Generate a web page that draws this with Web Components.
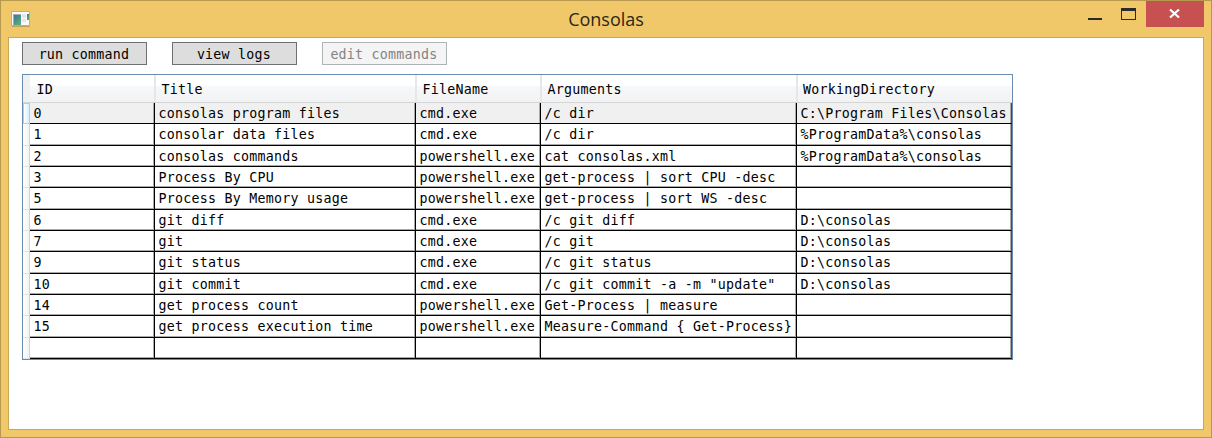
<!DOCTYPE html>
<html lang="en">
<head>
<meta charset="utf-8">
<title>Consolas</title>
<style>
html,body{margin:0;height:100%;overflow:hidden}
body{font:13.3px/20px "DejaVu Sans Mono","Liberation Mono",monospace;color:#000}
</style>
</head>
<body>
<app-window caption="Consolas">
  <tool-bar>
    <push-button>run command</push-button>
    <push-button>view logs</push-button>
    <push-button disabled>edit commands</push-button>
  </tool-bar>
  <command-grid></command-grid>
</app-window>
<script>
class AppWindow extends HTMLElement{
  constructor(){
    super();
    this.attachShadow({mode:'open'}).innerHTML=`
<style>
:host{display:flex;flex-direction:column;box-sizing:border-box;width:1212px;height:438px;background:#f0c869;border:1px solid #b6984f;padding:0 7px 7px}
header{display:grid;grid-template-columns:1fr auto 1fr;height:36px;flex:none}
.icon{margin:10px 0 0 3px;display:block}
h1{margin:0;font:400 18px/36px "Open Sans","Noto Sans",sans-serif;color:#2b2718;letter-spacing:0}
.controls{display:flex;justify-content:flex-end}
.controls svg{display:block}
main{flex:1;box-sizing:border-box;background:#fff;border:1px solid #c9a757;padding:4px 13px}
</style>
<header>
<svg class="icon" width="20" height="17" viewBox="0 0 20 17">
<defs><linearGradient id="g" x1="0" y1="0" x2=".7" y2="1"><stop stop-color="#3f719f"/><stop offset="1" stop-color="#56b078"/></linearGradient></defs>
<rect x="1" y="1" width="18" height="14" fill="#fafafa"/><path d="M.5 15V.5H18.5V14.5H.5" fill="none" stroke="#adb0aa"/><path d="M1 15.5H19" stroke="#c3a15d"/>
<rect x="2" y="3" width="8" height="11" fill="#a4adb5"/><rect x="3" y="4" width="7" height="10" fill="url(#g)"/>
<path d="M11 3h4v4h-4zM11 8h4v3h-4z" fill="#e4e6e7"/><path d="M16 3h2v6h-2z" fill="url(#g)"/>
</svg>
<h1></h1>
<div class="controls">
<svg width="148" height="27" viewBox="0 0 148 27" shape-rendering="crispEdges">
<path d="M32 17h14v2H32z" fill="#2a2a2a"/>
<path fill-rule="evenodd" d="M65 7h15v12H65zM66 10v8h13v-8z" fill="#2a2a2a"/>
<path d="M90 0h58v26H90z" fill="#c75050"/>
<path d="M114 8.5l9 8M123 8.5l-9 8" stroke="#fff" stroke-width="2.2" shape-rendering="auto"/>
</svg>
</div>
</header>
<main><slot></slot></main>`;
    this.shadowRoot.querySelector('h1').textContent=this.getAttribute('caption');
  }
}
customElements.define('app-window',AppWindow);

class ToolBar extends HTMLElement{
  constructor(){
    super();
    this.attachShadow({mode:'open'}).innerHTML=`<style>:host{display:flex;gap:25px}</style><slot></slot>`;
  }
}
customElements.define('tool-bar',ToolBar);

class PushButton extends HTMLElement{
  constructor(){
    super();
    this.attachShadow({mode:'open'}).innerHTML=`
<style>
:host{display:block}
button{display:block;box-sizing:border-box;width:125px;height:23px;margin:0;padding:2px 1px 0 0;border:1px solid #707070;background:#ddd;color:#000;font:inherit;line-height:19px;letter-spacing:.243px;text-align:center}
button:disabled{background:#f4f4f4;border-color:#adb2b5;color:#838383}
</style><button><slot></slot></button>`;
    this.shadowRoot.querySelector('button').disabled=this.hasAttribute('disabled');
  }
}
customElements.define('push-button',PushButton);

class GridRow extends HTMLElement{
  constructor(){
    super();
    this.attachShadow({mode:'open'}).innerHTML=`
<style>
:host{display:grid;grid-template-columns:7px 125px 261px 125px 256px 215px;height:var(--h,21px)}
.handle{box-sizing:border-box;background:linear-gradient(90deg,#fff,#f3f3f4);border-right:1px solid #d2d2d2;border-bottom:1px solid #e3e3e3}
.cell{box-sizing:border-box;padding:1px 0 0 3.6px;line-height:20px;white-space:pre;letter-spacing:.243px;border-right:1px solid #000;border-bottom:1px solid #000;box-shadow:inset -1px -1px #aaa;overflow:hidden}
.cell:last-child{border-right-color:#4a4a4a}
:host([selected]) .cell{background:#f0f0f0;box-shadow:inset -1px 0 #aaa}
:host([selected]) .handle{background:linear-gradient(90deg,#fff,#d5effb);border:1px solid #9bd7f2}
</style><div class="handle"></div>`;
  }
  set values(list){
    for(const value of list){
      const cell=document.createElement('div');
      cell.className='cell';
      cell.textContent=value;
      this.shadowRoot.append(cell);
    }
  }
}
customElements.define('grid-row',GridRow);

class CommandGrid extends HTMLElement{
  constructor(){
    super();
    this.attachShadow({mode:'open'}).innerHTML=`
<style>
:host{display:block;box-sizing:border-box;width:991px;margin-top:9px;border:1px solid #688caf}
.head{display:grid;grid-template-columns:7px 126px 261px 125px 256px 214px;height:28px;box-sizing:border-box;background:linear-gradient(#fff 0,#fff 40%,#f7f8fa 41%,#f1f2f4 100%);border-bottom:1px solid #d5d5d5;letter-spacing:.243px}
.head span{box-sizing:border-box;padding:5px 0 0 5.6px;line-height:20px;border-right:2px solid #e6e7e9}
.head span:first-child{background:#f0f0f0;border:0}
.head span:nth-child(2){padding-left:6.6px}
.head span:last-child{border:0;padding-left:5px}
</style>
<div class="head"><span></span><span>ID</span><span>Title</span><span>FileName</span><span>Arguments</span><span>WorkingDirectory</span></div>`;
    const rows=[
      ['0','consolas program files','cmd.exe','/c dir','C:\\Program Files\\Consolas'],
      ['1','consolar data files','cmd.exe','/c dir','%ProgramData%\\consolas'],
      ['2','consolas commands','powershell.exe','cat consolas.xml','%ProgramData%\\consolas'],
      ['3','Process By CPU','powershell.exe','get-process | sort CPU -desc',''],
      ['5','Process By Memory usage','powershell.exe','get-process | sort WS -desc',''],
      ['6','git diff','cmd.exe','/c git diff','D:\\consolas'],
      ['7','git','cmd.exe','/c git','D:\\consolas'],
      ['9','git status','cmd.exe','/c git status','D:\\consolas'],
      ['10','git commit','cmd.exe','/c git commit -a -m "update"','D:\\consolas'],
      ['14','get process count','powershell.exe','Get-Process | measure',''],
      ['15','get process execution time','powershell.exe','Measure-Command { Get-Process}',''],
      ['','','','','']
    ];
    rows.forEach((values,i)=>{
      const row=document.createElement('grid-row');
      if(i===0)row.setAttribute('selected','');
      row.style.setProperty('--h',i%3===1?'22px':'21px');
      row.values=values;
      this.shadowRoot.append(row);
    });
  }
}
customElements.define('command-grid',CommandGrid);
</script>
</body>
</html>
